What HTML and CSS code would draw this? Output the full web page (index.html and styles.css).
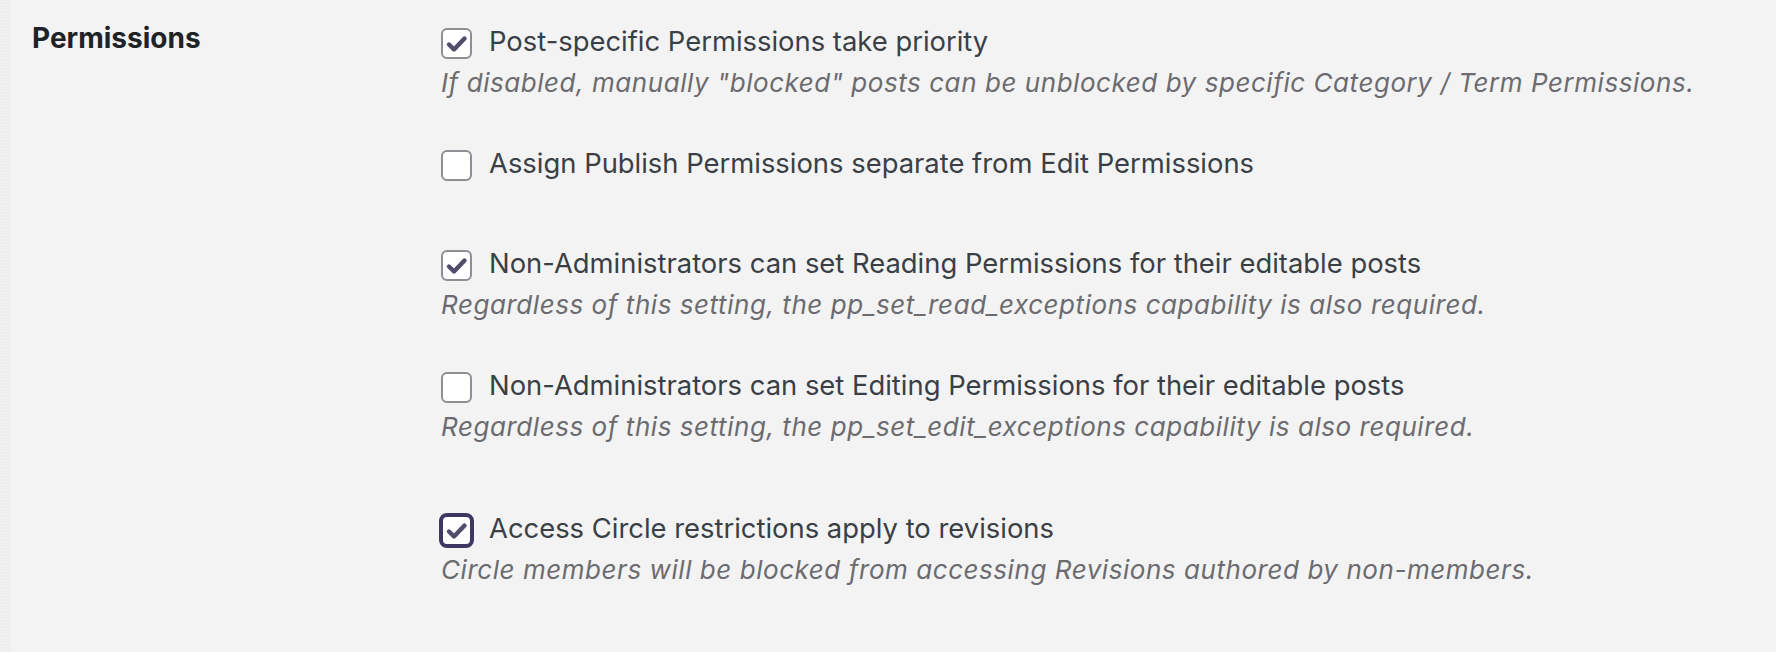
FILE: index.html
```html
<!DOCTYPE html>
<html lang="en">

<head>
  <meta charset="UTF-8" />
  <meta name="viewport" content="width=device-width, initial-scale=1.0" />
  <title>Permissions</title>
  <link rel="stylesheet" href="styles.css">
</head>

<body>
  <div class="page">
    <div class="menu-edge"></div>
    <div class="form-table">
      <div class="row-title">Permissions</div>
      <div class="row-fields">
        <div class="option">
          <label class="check-label">
            <span class="checkbox">
              <svg viewBox="0 0 27 27"><polyline points="6,14.5 11,19.5 21.5,8.5" /></svg>
            </span>
            Post-specific Permissions take priority
          </label>
          <p class="description">If disabled, manually "blocked" posts can be unblocked by specific Category / Term Permissions.</p>
        </div>
        <div class="option no-desc">
          <label class="check-label">
            <span class="checkbox unchecked"></span>
            Assign Publish Permissions separate from Edit Permissions
          </label>
        </div>
        <div class="option">
          <label class="check-label">
            <span class="checkbox">
              <svg viewBox="0 0 27 27"><polyline points="6,14.5 11,19.5 21.5,8.5" /></svg>
            </span>
            Non-Administrators can set Reading Permissions for their editable posts
          </label>
          <p class="description">Regardless of this setting, the pp_set_read_exceptions capability is also required.</p>
        </div>
        <div class="option spaced">
          <label class="check-label">
            <span class="checkbox unchecked"></span>
            Non-Administrators can set Editing Permissions for their editable posts
          </label>
          <p class="description">Regardless of this setting, the pp_set_edit_exceptions capability is also required.</p>
        </div>
        <div class="option">
          <label class="check-label">
            <span class="checkbox focused">
              <svg viewBox="0 0 27 27"><polyline points="6,14.5 11,19.5 21.5,8.5" /></svg>
            </span>
            Access Circle restrictions apply to revisions
          </label>
          <p class="description">Circle members will be blocked from accessing Revisions authored by non-members.</p>
        </div>
      </div>
    </div>
  </div>
</body>

</html>
```

FILE: styles.css
```css
* {
  margin: 0;
  padding: 0;
  box-sizing: border-box;
}

body {
  background: #f3f3f3;
  font-family: Inter, "Noto Sans", sans-serif;
  width: 1776px;
  height: 652px;
  overflow: hidden;
}

.page {
  display: flex;
  height: 652px;
}

.menu-edge {
  width: 11px;
  flex-shrink: 0;
  background-color: #eeeeee;
  background-image: radial-gradient(#f7f7f7 0.8px, transparent 1px);
  background-size: 3px 3px;
}

.form-table {
  display: flex;
  padding-left: 21px;
}

.row-title {
  width: 409px;
  flex-shrink: 0;
  font-size: 28px;
  font-weight: 700;
  color: #1d2327;
  line-height: 42px;
  padding-top: 17px;
}

.row-fields {
  padding-top: 20px;
}

.option {
  margin-bottom: 38px;
}

.option.no-desc {
  margin-bottom: 58px;
}

.option.spaced {
  margin-bottom: 59px;
}

.check-label {
  display: flex;
  align-items: center;
  gap: 17px;
  font-size: 27.4px;
  line-height: 42px;
  color: #3a3f46;
}

.checkbox {
  width: 31px;
  height: 31px;
  flex-shrink: 0;
  border: 2px solid #8c8f94;
  border-radius: 6px;
  background: #fff;
  display: flex;
  align-items: center;
  justify-content: center;
  margin-top: 4px;
}

.checkbox svg {
  width: 27px;
  height: 27px;
  fill: none;
  stroke: #504c6a;
  stroke-width: 4.4;
  stroke-linecap: round;
  stroke-linejoin: round;
}

.checkbox.focused {
  width: 35px;
  height: 35px;
  margin-left: -2px;
  margin-right: -2px;
  border: 4px solid #3d3762;
  border-radius: 8px;
}

.description {
  font-size: 26px;
  font-style: italic;
  letter-spacing: 0.55px;
  line-height: 42px;
  color: #6b6b70;
}
```
